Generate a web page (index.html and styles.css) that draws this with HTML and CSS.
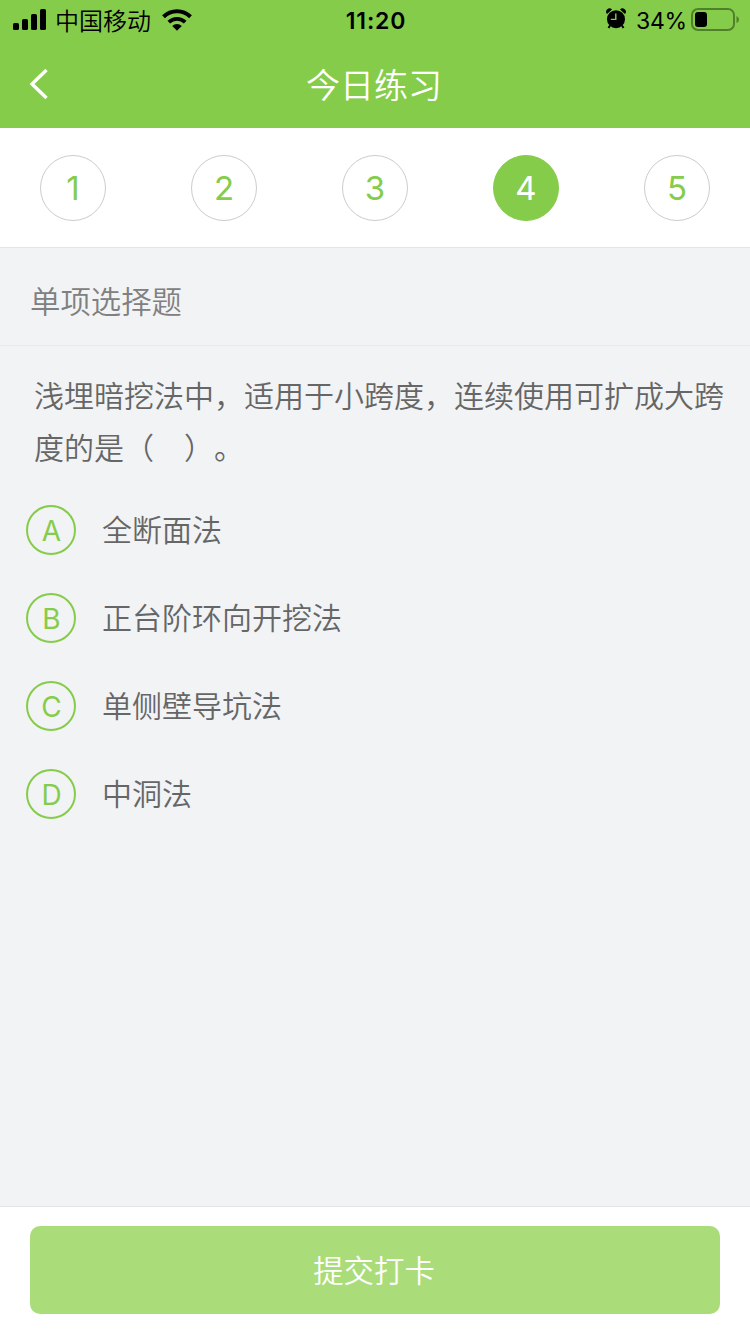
FILE: index.html
```html
<!DOCTYPE html>
<html lang="zh-CN">
<head>
    <meta charset="utf-8" />
    <title>今日练习</title>
    <link rel="stylesheet" href="styles.css">
</head>
<body>
    <header>
        <div class="status">
            <div class="status-left">
                <svg class="signal" width="34" height="22" viewBox="0 0 34 22">
                    <rect x="0" y="14" width="6" height="7" rx="1.6" />
                    <rect x="9" y="10" width="6" height="11" rx="1.6" />
                    <rect x="18" y="5" width="6" height="16" rx="1.6" />
                    <rect x="27" y="0" width="6" height="21" rx="1.6" />
                </svg>
                <span class="carrier">中国移动</span>
                <svg class="wifi" width="30" height="22" viewBox="0 0 30 22">
                    <path d="M1.5 7.8A19.3 19.3 0 0 1 28.5 7.8" fill="none" stroke="#000" stroke-width="4" />
                    <path d="M6.8 13.1A11.8 11.8 0 0 1 23.2 13.1" fill="none" stroke="#000" stroke-width="3.8" />
                    <path d="M10.2 16.9A6.8 6.8 0 0 1 19.8 16.9L15 21.8Z" />
                </svg>
            </div>
            <span class="time">11:20</span>
            <div class="status-right">
                <svg class="alarm" width="20" height="22" viewBox="0 0 20 22">
                    <path d="M4 17.5L2.5 20M16 17.5L17.5 20" stroke="#000" stroke-width="2" />
                    <circle cx="10" cy="11.2" r="9" />
                    <path d="M1 6A3.2 3.2 0 0 1 6 1.6ZM19 6A3.2 3.2 0 0 0 14 1.6Z" />
                    <path d="M9.8 5.5V11.4H4.8" fill="none" stroke="#86cc4b" stroke-width="1.4" />
                </svg>
                <span class="percent">34%</span>
                <svg class="battery" width="48" height="24" viewBox="0 0 48 24">
                    <rect x="1" y="1" width="42" height="21" rx="6" fill="none" stroke="#51802b" stroke-width="2" />
                    <rect x="4" y="4" width="12" height="15" rx="3" />
                    <path d="M45.5 8Q48 9 48 11.5T45.5 15Z" fill="#51802b" />
                </svg>
            </div>
        </div>
        <div class="navbar">
            <svg class="back" width="20" height="32" viewBox="0 0 20 32">
                <path d="M17.5 2L3 16L17.5 30" />
            </svg>
            <h1>今日练习</h1>
        </div>
    </header>

    <nav class="steps">
        <span class="step">1</span>
        <span class="step">2</span>
        <span class="step">3</span>
        <span class="step active">4</span>
        <span class="step">5</span>
    </nav>

    <main>
        <h2>单项选择题</h2>
        <p class="question">浅埋暗挖法中，适用于小跨度，连续使用可扩成大跨度的是（&emsp;）。</p>
        <ul class="answers">
            <li><span class="letter">A</span><span class="text">全断面法</span></li>
            <li><span class="letter">B</span><span class="text">正台阶环向开挖法</span></li>
            <li><span class="letter">C</span><span class="text">单侧壁导坑法</span></li>
            <li><span class="letter">D</span><span class="text">中洞法</span></li>
        </ul>
    </main>

    <footer>
        <button type="button">提交打卡</button>
    </footer>
</body>
</html>
```
FILE: styles.css
```css
* {
    box-sizing: border-box;
}

body {
    display: flex;
    flex-direction: column;
    height: 1334px;
    margin: 0;
    background: #f2f3f5;
    color: #666;
    font-family: Inter, "Noto Sans CJK SC", sans-serif;
    font-weight: 350;
    text-spacing-trim: space-all;
}

header {
    height: 128px;
    background: #86cc4b;
}

.status {
    display: grid;
    grid-template-columns: 1fr auto 1fr;
    align-items: center;
    height: 40px;
    padding: 0 11px 0 13px;
    color: #000;
    font-size: 24px;
}

.status-left,
.status-right {
    display: flex;
    align-items: center;
}

.status-right {
    justify-content: flex-end;
}

.carrier {
    margin: 0 11px 0 8px;
    padding-bottom: 2px;
}

.time {
    padding-top: 1px;
    font-size: 23px;
    font-weight: 600;
    letter-spacing: 0.8px;
}

.alarm {
    margin-bottom: 2px;
}

.percent {
    margin: 0 4px 0 10px;
    padding-top: 2px;
    font-size: 23px;
    font-weight: 400;
    letter-spacing: -0.2px;
}

.navbar {
    display: grid;
    grid-template-columns: 60px 1fr 60px;
    align-items: center;
    height: 88px;
}

.back {
    margin-left: 29px;
    fill: none;
    stroke: #fff;
    stroke-width: 3.4;
}

h1 {
    margin: 0;
    padding: 0 2px 2px 0;
    color: #fff;
    font-size: 34px;
    font-weight: 350;
    text-align: center;
}

.steps {
    display: flex;
    justify-content: space-between;
    align-items: center;
    height: 120px;
    padding: 0 40px;
    background: #fff;
    border-bottom: 1px solid #e5e5e5;
}

.step {
    width: 66px;
    height: 66px;
    border: 1px solid #ccc;
    border-radius: 50%;
    color: #86cc4b;
    font-size: 33px;
    font-weight: 400;
    line-height: 65px;
    text-align: center;
}

.step.active {
    background: #86cc4b;
    border-color: #86cc4b;
    color: #fff;
}

main {
    flex: 1;
}

h2 {
    height: 98px;
    margin: 0;
    padding-left: 30px;
    border-bottom: 1px solid #e8e9eb;
    color: #808080;
    font-size: 30.4px;
    font-weight: 350;
    line-height: 108px;
}

.question {
    margin: 0;
    padding: 24px 20px 0 34px;
    font-size: 30px;
    line-height: 52px;
}

.answers {
    display: flex;
    flex-direction: column;
    gap: 38px;
    margin: 0;
    padding: 31px 26px 0;
    list-style: none;
    font-size: 30px;
}

.answers li {
    display: flex;
    align-items: center;
    gap: 26px;
    height: 50px;
}

.text {
    padding-bottom: 4px;
}

.letter {
    width: 50px;
    height: 50px;
    padding-left: 1px;
    border: 2px solid #86cc4b;
    border-radius: 50%;
    color: #86cc4b;
    font-size: 28px;
    font-weight: 400;
    line-height: 49px;
    text-align: center;
}

footer {
    height: 128px;
    padding: 19px 30px;
    background: #fff;
    border-top: 1px solid #e5e5e5;
}

button {
    width: 100%;
    height: 88px;
    padding: 0 8px 2px 6px;
    border: 0;
    border-radius: 10px;
    background: #aadd7a;
    color: #fff;
    font-family: inherit;
    font-size: 30.4px;
    font-weight: 350;
}
```
